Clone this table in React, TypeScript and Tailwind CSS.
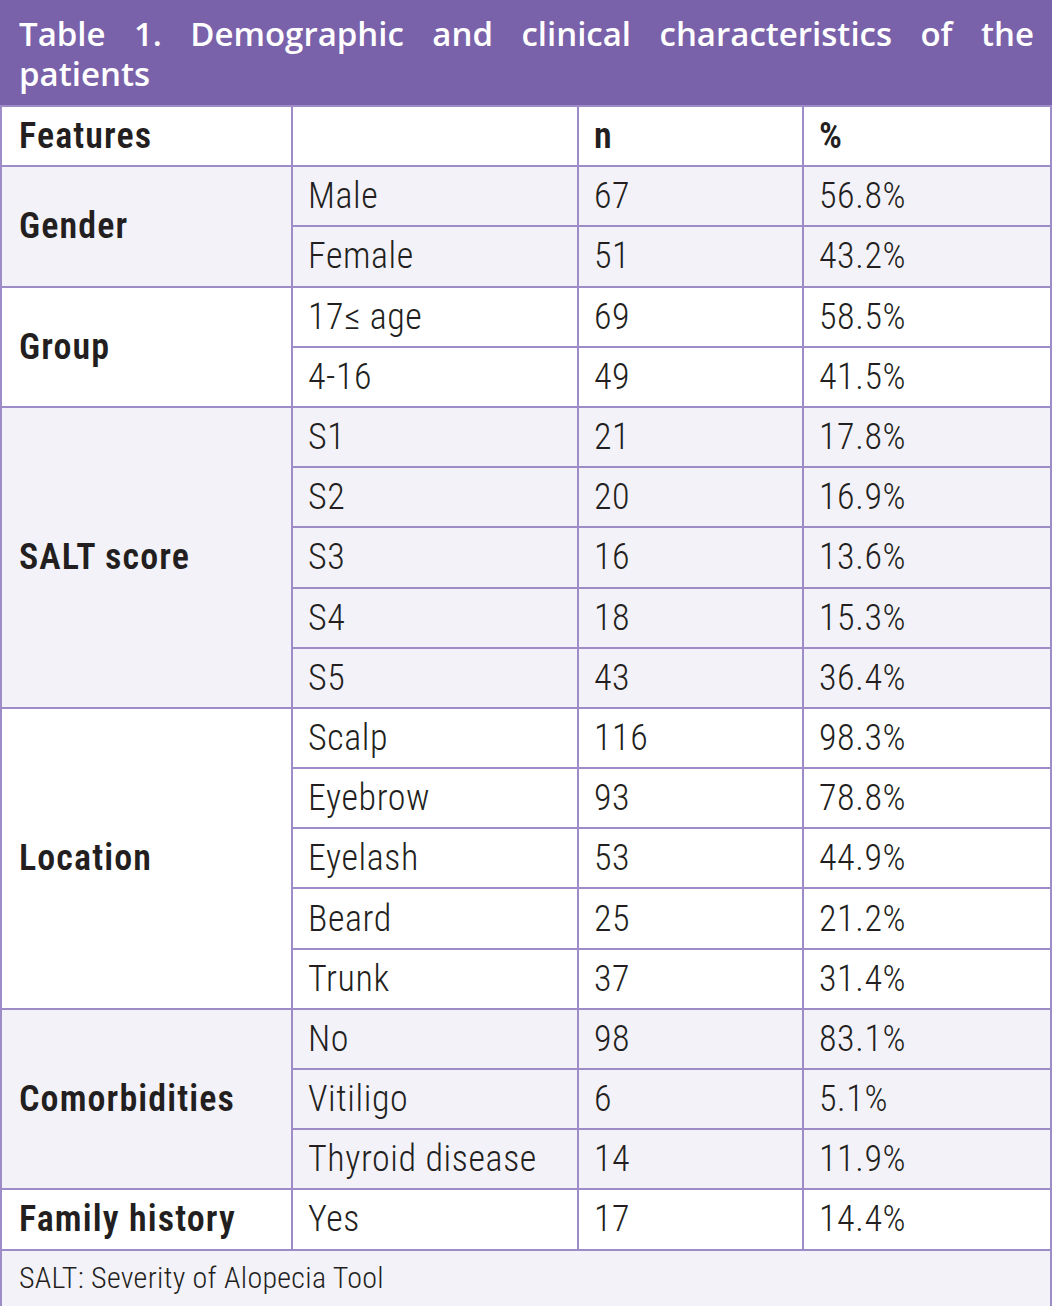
import React from 'react';

type Group = {
  label: string;
  shade: boolean;
  rows: [string, string, string][];
};

const groups: Group[] = [
  {
    label: 'Gender',
    shade: true,
    rows: [
      ['Male', '67', '56.8%'],
      ['Female', '51', '43.2%'],
    ],
  },
  {
    label: 'Group',
    shade: false,
    rows: [
      ['17≤ age', '69', '58.5%'],
      ['4-16', '49', '41.5%'],
    ],
  },
  {
    label: 'SALT score',
    shade: true,
    rows: [
      ['S1', '21', '17.8%'],
      ['S2', '20', '16.9%'],
      ['S3', '16', '13.6%'],
      ['S4', '18', '15.3%'],
      ['S5', '43', '36.4%'],
    ],
  },
  {
    label: 'Location',
    shade: false,
    rows: [
      ['Scalp', '116', '98.3%'],
      ['Eyebrow', '93', '78.8%'],
      ['Eyelash', '53', '44.9%'],
      ['Beard', '25', '21.2%'],
      ['Trunk', '37', '31.4%'],
    ],
  },
  {
    label: 'Comorbidities',
    shade: true,
    rows: [
      ['No', '98', '83.1%'],
      ['Vitiligo', '6', '5.1%'],
      ['Thyroid disease', '14', '11.9%'],
    ],
  },
  {
    label: 'Family history',
    shade: false,
    rows: [['Yes', '17', '14.4%']],
  },
];

// first column gets a bit more left padding than the value columns
const line = 'border-2 border-[#9d8cc8] align-middle';
const first = `${line} px-[17px] font-semibold tracking-[1.1px]`;
const cell = `${line} px-[15px] tracking-[0.6px]`;

export default function App() {
  return (
    <div className="w-[1052px] bg-white font-['Roboto_Condensed',sans-serif] font-light text-[#231f20]">
      <div className="h-[105px] bg-[#7a62aa] pl-[19px] pr-[18px] pt-[14px]">
        <p className="text-justify font-['Open_Sans',sans-serif] text-[33px] font-semibold leading-[40px] text-white">
          Table 1. Demographic and clinical characteristics of the patients
        </p>
      </div>
      <table className="w-full table-fixed border-collapse text-[36px] leading-none">
        <colgroup>
          <col className="w-[291px]" />
          <col className="w-[286px]" />
          <col className="w-[225px]" />
          <col />
        </colgroup>
        <tbody>
          <tr className="h-[60.2px] bg-white">
            <td className={first}>Features</td>
            <td className={cell} />
            <td className={`${cell} font-semibold`}>n</td>
            <td className={`${cell} font-semibold`}>%</td>
          </tr>
          {groups.map((g) =>
            g.rows.map((r, i) => (
              <tr key={g.label + r[0]} className={`h-[60.2px] ${g.shade ? 'bg-[#f4f2f9]' : 'bg-white'}`}>
                {i === 0 && (
                  <td rowSpan={g.rows.length} className={first}>
                    {g.label}
                  </td>
                )}
                <td className={cell}>{r[0]}</td>
                <td className={cell}>{r[1]}</td>
                <td className={cell}>{r[2]}</td>
              </tr>
            ))
          )}
          <tr className="h-[57px] bg-[#f4f2f9]">
            <td colSpan={4} className={`${line} px-[17px] text-[30px] tracking-[0.3px]`}>
              SALT: Severity of Alopecia Tool
            </td>
          </tr>
        </tbody>
      </table>
    </div>
  );
}
